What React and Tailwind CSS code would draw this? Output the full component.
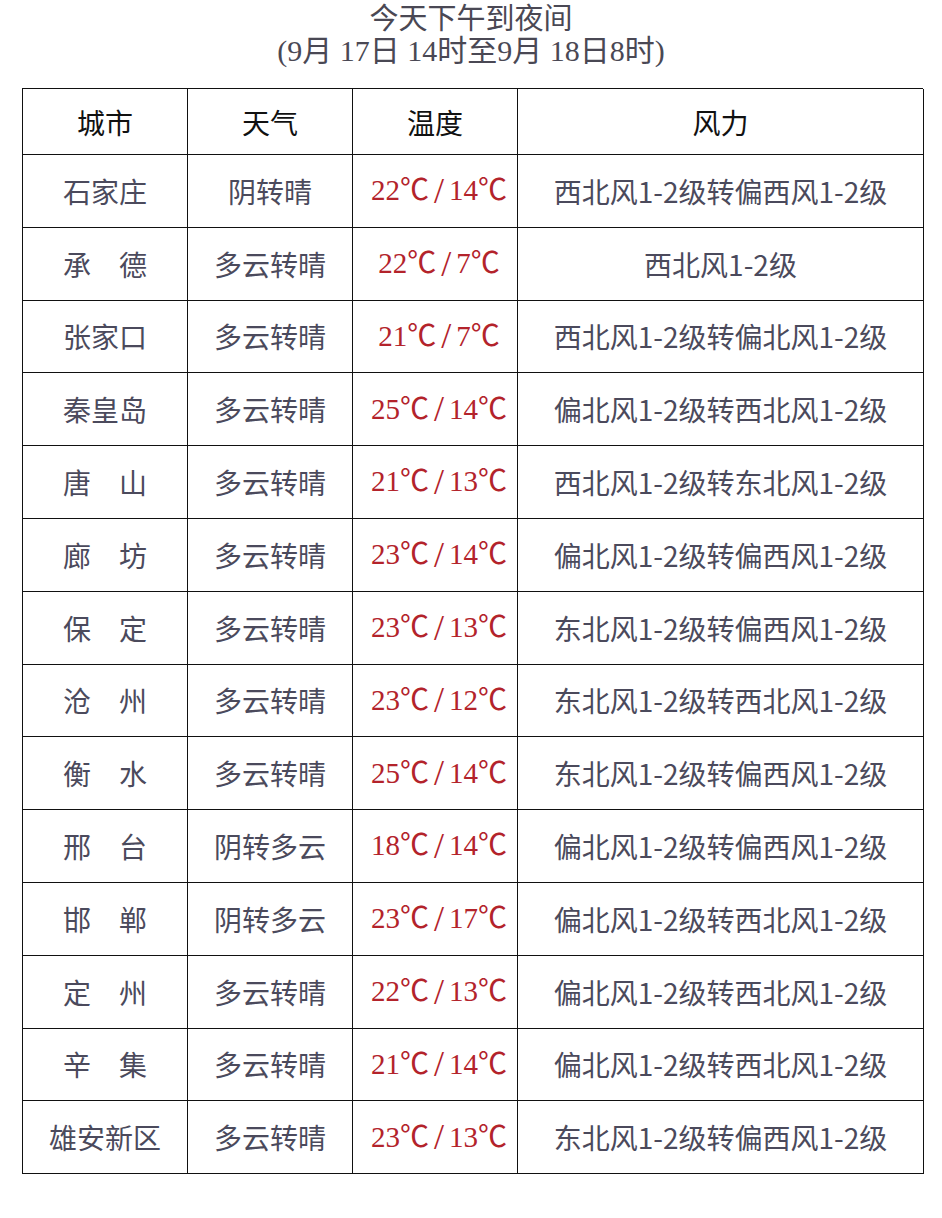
import React from 'react'

const rows = [
    ['石家庄', '阴转晴', '22℃/14℃', '西北风1-2级转偏西风1-2级'],
    ['承　德', '多云转晴', '22℃/7℃', '西北风1-2级'],
    ['张家口', '多云转晴', '21℃/7℃', '西北风1-2级转偏北风1-2级'],
    ['秦皇岛', '多云转晴', '25℃/14℃', '偏北风1-2级转西北风1-2级'],
    ['唐　山', '多云转晴', '21℃/13℃', '西北风1-2级转东北风1-2级'],
    ['廊　坊', '多云转晴', '23℃/14℃', '偏北风1-2级转偏西风1-2级'],
    ['保　定', '多云转晴', '23℃/13℃', '东北风1-2级转偏西风1-2级'],
    ['沧　州', '多云转晴', '23℃/12℃', '东北风1-2级转西北风1-2级'],
    ['衡　水', '多云转晴', '25℃/14℃', '东北风1-2级转偏西风1-2级'],
    ['邢　台', '阴转多云', '18℃/14℃', '偏北风1-2级转偏西风1-2级'],
    ['邯　郸', '阴转多云', '23℃/17℃', '偏北风1-2级转西北风1-2级'],
    ['定　州', '多云转晴', '22℃/13℃', '偏北风1-2级转西北风1-2级'],
    ['辛　集', '多云转晴', '21℃/14℃', '偏北风1-2级转西北风1-2级'],
    ['雄安新区', '多云转晴', '23℃/13℃', '东北风1-2级转偏西风1-2级'],
]

const sans = "font-['Noto_Sans_CJK_SC',sans-serif]"
const serif = "font-['Liberation_Serif','Noto_Sans_CJK_SC',serif]"

const Cell = ({ children, className = '' }) => (
    <div className={`flex items-center justify-center border-r border-b border-[#111] ${className}`}>
        {children}
    </div>
)

// 温度：高温/低温
const Temp = ({ value }) => {
    const [hi, lo] = value.split('/')
    return (
        <span className="flex items-center">
            <span>{hi}</span>
            <span className="mx-[5px] text-[36px] leading-none">/</span>
            <span>{lo}</span>
        </span>
    )
}

export default function App() {
    return (
        <div className="w-[942px] h-[1218px] bg-white">
            {/* 标题 */}
            <div className={`pt-[4px] text-center text-[#4a4854] ${serif}`}>
                <div className="text-[29px] leading-[31px]">今天下午到夜间</div>
                <div className="text-[30px] leading-[31px]">(9月 17日 14时至9月 18日8时)</div>
            </div>

            <div className="ml-[22px] mt-[22px] w-[901px] grid grid-cols-[165px_165px_165px_406px] border-l border-t border-[#111]">
                {['城市', '天气', '温度', '风力'].map((h) => (
                    <Cell key={h} className={`h-[66px] text-[28px] text-[#111] ${sans}`}>{h}</Cell>
                ))}
                {rows.map(([city, weather, temp, wind]) => (
                    <React.Fragment key={city}>
                        <Cell className={`h-[72.8px] text-[28px] text-[#4b4a5c] ${sans}`}>{city}</Cell>
                        <Cell className={`h-[72.8px] text-[28px] text-[#4b4a5c] ${sans}`}>{weather}</Cell>
                        <Cell className={`h-[72.8px] pl-[8px] text-[29px] text-[#b3232b] ${serif}`}><Temp value={temp} /></Cell>
                        <Cell className={`h-[72.8px] text-[28px] text-[#4b4a5c] ${sans}`}>{wind}</Cell>
                    </React.Fragment>
                ))}
            </div>
        </div>
    )
}
